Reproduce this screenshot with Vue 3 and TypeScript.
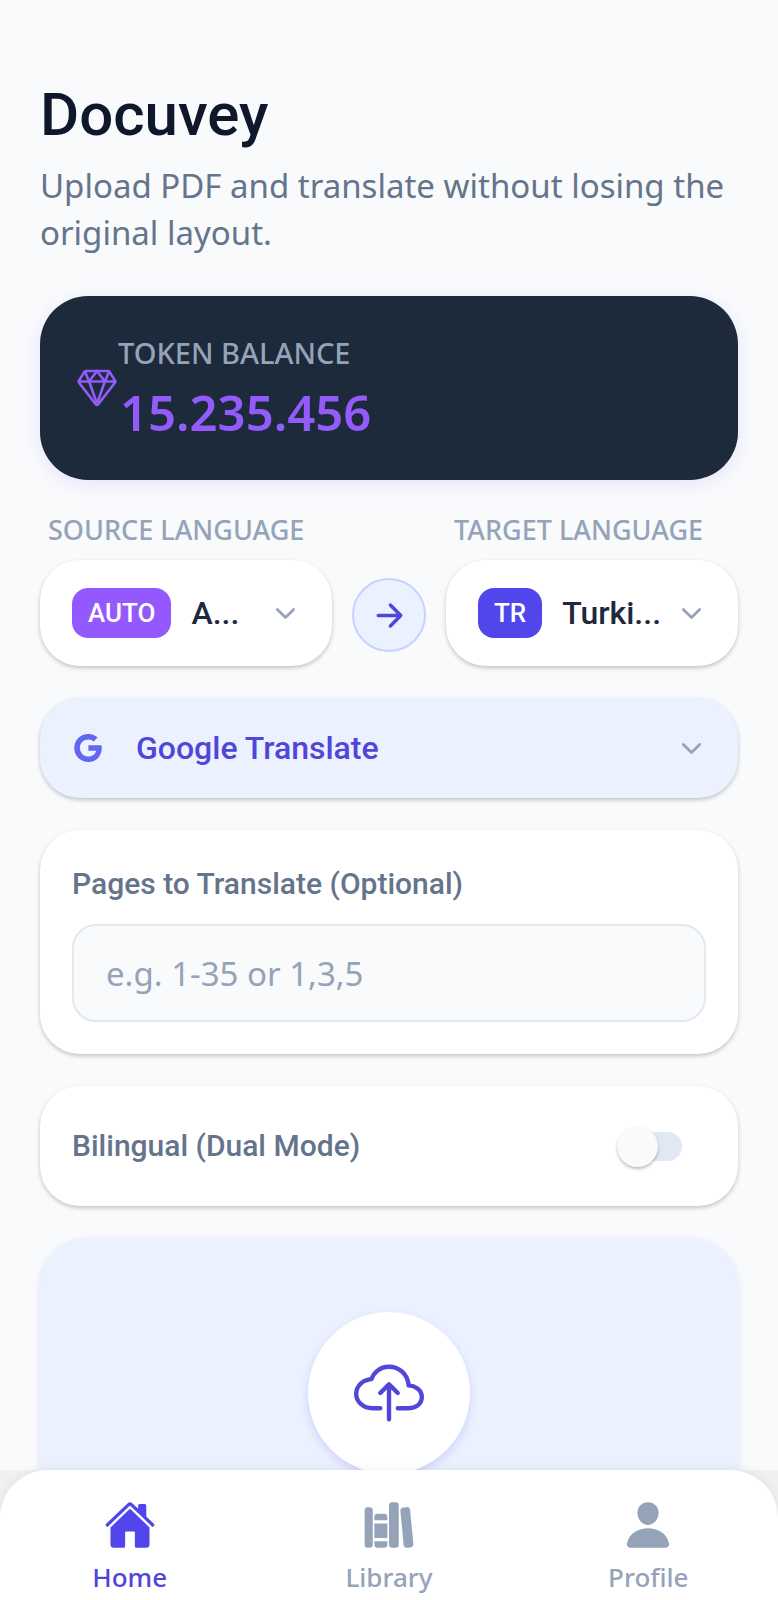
<script setup lang="ts">
import { ref } from 'vue'

interface Language {
  code: string
  label: string
}

interface Tab {
  id: string
  label: string
}

const source = ref<Language>({ code: 'AUTO', label: 'A...' })
const target = ref<Language>({ code: 'TR', label: 'Turki...' })
const engine = ref('Google Translate')
const pages = ref('')
const bilingual = ref(false)
const balance = '15.235.456'

const tabs: Tab[] = [
  { id: 'home', label: 'Home' },
  { id: 'library', label: 'Library' },
  { id: 'profile', label: 'Profile' },
]
const activeTab = ref('home')
</script>

<template>
  <div class="screen">
    <main class="content">
      <header class="intro">
        <h1>Docuvey</h1>
        <p>Upload PDF and translate without losing the original layout.</p>
      </header>

      <section class="balance">
        <svg class="gem" viewBox="0 0 512 512" aria-hidden="true">
          <path d="M35.42 188.21l207.75 269.46a16.17 16.17 0 0025.66 0l207.75-269.46a16.52 16.52 0 00.95-18.75L407.06 55.71A16.22 16.22 0 00393.27 48H118.73a16.22 16.22 0 00-13.79 7.71L34.47 169.46a16.52 16.52 0 00.95 18.75zM48 176h416" />
          <path d="M400 64l-48 112-96-128M112 64l48 112 96-128M256 448l-96-272M256 448l96-272" />
        </svg>
        <div class="balance-text">
          <div class="balance-label">TOKEN BALANCE</div>
          <div class="balance-value">{{ balance }}</div>
        </div>
      </section>

      <section class="languages">
        <div class="language">
          <label for="source">SOURCE LANGUAGE</label>
          <div class="card picker">
            <span class="badge auto">{{ source.code }}</span>
            <select id="source" v-model="source.label">
              <option>A...</option>
            </select>
            <svg class="chevron" viewBox="0 0 512 512" aria-hidden="true"><path d="M112 184l144 144 144-144" /></svg>
          </div>
        </div>
        <button class="swap" type="button" aria-label="Swap languages">
          <svg viewBox="0 0 512 512" aria-hidden="true"><path d="M268 112l144 144-144 144M392 256H100" /></svg>
        </button>
        <div class="language">
          <label for="target">TARGET LANGUAGE</label>
          <div class="card picker">
            <span class="badge">{{ target.code }}</span>
            <select id="target" v-model="target.label">
              <option>Turki...</option>
            </select>
            <svg class="chevron" viewBox="0 0 512 512" aria-hidden="true"><path d="M112 184l144 144 144-144" /></svg>
          </div>
        </div>
      </section>

      <section class="card engine">
        <svg class="google" viewBox="0 0 512 512" aria-hidden="true">
          <path d="M473.16 221.48l-2.26-9.59H262.46v88.22H387c-12.93 61.4-72.93 93.72-121.94 93.72-35.66 0-73.25-15-98.13-39.11a140.08 140.08 0 01-41.8-98.88c0-37.16 16.7-74.33 41-98.78s61-38.13 97.49-38.13c41.79 0 71.74 22.19 82.94 32.31l62.69-62.36C390.86 72.72 340.34 32 261.6 32c-60.75 0-119 23.27-161.58 65.71C58 139.5 36.25 199.93 36.25 256s20.58 113.48 61.3 155.6c43.51 44.92 105.13 68.4 168.58 68.4 57.73 0 112.45-22.62 151.45-63.66 38.34-40.4 58.17-96.3 58.17-154.9 0-24.67-2.48-39.32-2.59-39.96z" />
        </svg>
        <select v-model="engine" aria-label="Translation engine">
          <option>Google Translate</option>
        </select>
        <svg class="chevron" viewBox="0 0 512 512" aria-hidden="true"><path d="M112 184l144 144 144-144" /></svg>
      </section>

      <section class="card pages">
        <label for="pages">Pages to Translate (Optional)</label>
        <input id="pages" v-model="pages" type="text" placeholder="e.g. 1-35 or 1,3,5" />
      </section>

      <section class="card bilingual">
        <label for="bilingual">Bilingual (Dual Mode)</label>
        <input id="bilingual" v-model="bilingual" class="switch" type="checkbox" role="switch" />
      </section>

      <section class="upload">
        <button class="upload-button" type="button" aria-label="Upload PDF">
          <svg viewBox="0 0 512 512" aria-hidden="true">
            <path d="M320 367.79h76c55 0 100-29.21 100-83.6s-53-81.47-96-83.6c-8.89-85.06-71-136.8-144-136.8-69 0-113.44 45.79-128 91.2-60 5.7-112 43.88-112 106.4s54 106.4 120 106.4h56" />
            <path d="M320 255.79l-64-64-64 64M256 448.21V207.79" />
          </svg>
        </button>
      </section>
    </main>

    <div class="dock">
      <nav class="tabs">
        <button
          v-for="tab in tabs"
          :key="tab.id"
          type="button"
          class="tab"
          :class="{ active: tab.id === activeTab }"
          @click="activeTab = tab.id"
        >
          <svg viewBox="0 0 512 512" aria-hidden="true">
            <template v-if="tab.id === 'home'">
              <path d="M261.56 101.28a8 8 0 00-11.06 0L66.4 277.15a8 8 0 00-2.47 5.79L63.9 448a32 32 0 0032 32H192a16 16 0 0016-16V328a8 8 0 018-8h80a8 8 0 018 8v136a16 16 0 0016 16h96.06a32 32 0 0032-32V282.94a8 8 0 00-2.47-5.79z" />
              <path d="M490.91 244.15l-74.8-71.56V64a16 16 0 00-16-16h-48a16 16 0 00-16 16v32l-57.92-55.38C272.77 35.14 264.71 32 256 32c-8.68 0-16.72 3.14-22.14 8.63l-212.7 203.5c-6.22 6-7 15.87-1.34 22.37A16 16 0 0043 267.56L250.5 69.28a8 8 0 0111.06 0l207.52 198.28a16 16 0 0022.59-.44c6.14-6.36 5.63-16.86-.76-22.97z" />
            </template>
            <template v-else-if="tab.id === 'library'">
              <path d="M64 480H48a32 32 0 01-32-32V112a32 32 0 0132-32h16a32 32 0 0132 32v336a32 32 0 01-32 32zM240 176a32 32 0 00-32-32h-64a32 32 0 00-32 32v28a4 4 0 004 4h120a4 4 0 004-4zM112 448a32 32 0 0032 32h64a32 32 0 0032-32v-30a2 2 0 00-2-2H114a2 2 0 00-2 2z" />
              <rect x="112" y="240" width="128" height="144" rx="2" />
              <path d="M320 480h-32a32 32 0 01-32-32V64a32 32 0 0132-32h32a32 32 0 0132 32v384a32 32 0 01-32 32zM495.89 445.45l-32.23-340c-1.48-15.65-16.94-27-34.53-25.31l-31.85 3c-17.59 1.67-30.65 15.71-29.17 31.36l32.23 340c1.48 15.65 16.94 27 34.53 25.31l31.85-3c17.59-1.67 30.65-15.71 29.17-31.36z" />
            </template>
            <path v-else d="M332.64 64.58C313.18 43.57 286 32 256 32c-30.16 0-57.43 11.5-76.8 32.38-19.58 21.11-29.12 49.8-26.88 80.78C156.76 206.28 203.27 256 256 256s99.16-49.71 103.67-110.82c2.27-30.7-7.33-59.33-27.03-80.6zM432 480H80a31 31 0 01-24.2-11.13c-6.5-7.77-9.12-18.38-7.18-29.11C57.06 392.94 83.4 353.61 124.8 326c36.78-24.51 83.37-38 131.2-38s94.42 13.5 131.2 38c41.4 27.6 67.74 66.93 76.18 113.75 1.94 10.73-.68 21.34-7.18 29.11A31 31 0 01432 480z" />
          </svg>
          <span>{{ tab.label }}</span>
        </button>
      </nav>
    </div>
  </div>
</template>

<style>
body {
  background: #f8fafc;
}
</style>

<style scoped>
* {
  box-sizing: border-box;
}

.screen {
  display: flex;
  flex-direction: column;
  height: 100vh;
  overflow: hidden;
  background: #f8fafc;
  color: #64748b;
  font-family: "Noto Sans", "Open Sans", sans-serif;
}

.content {
  flex: 1;
  min-height: 0;
  display: flex;
  flex-direction: column;
  gap: 32px;
  padding: 80px 40px 0;
  overflow-y: auto;
  scrollbar-width: none;
}

.content > * {
  flex-shrink: 0;
}

button,
input,
select {
  margin: 0;
  border: 0;
  font: inherit;
  color: inherit;
}

select {
  appearance: none;
  flex: 1;
  min-width: 0;
  padding: 0;
  background: transparent;
  outline: none;
}

svg {
  display: block;
  flex: none;
}

.intro {
  padding-bottom: 8px;
}

h1 {
  margin: 0;
  font-family: Roboto, "Noto Sans", sans-serif;
  font-size: 60px;
  font-weight: 500;
  line-height: 70px;
  color: #0f172a;
}

p {
  margin: 12px 0 0;
  font-size: 33px;
  line-height: 47px;
}

.balance {
  display: flex;
  align-items: center;
  height: 184px;
  padding: 0 36px;
  border-radius: 48px;
  background: #1c2a3c;
  box-shadow: 0 4px 16px rgba(139, 92, 246, 0.14);
}

.gem {
  width: 42px;
  height: 42px;
  fill: none;
  stroke: #935bf9;
  stroke-width: 32;
  stroke-linecap: round;
  stroke-linejoin: round;
}

.balance-text {
  padding-top: 10px;
}

.balance-label {
  font-size: 29px;
  font-weight: 500;
  line-height: 38px;
  color: #94a3b8;
}

.balance-value {
  padding-left: 2px;
  font-size: 49px;
  font-weight: 600;
  line-height: 80px;
  color: #935bf9;
}

.languages {
  display: grid;
  grid-template-columns: 1fr 74px 1fr;
  gap: 20px;
  align-items: end;
}

.language {
  display: flex;
  flex-direction: column;
  gap: 12px;
  min-width: 0;
}

.language label {
  padding-left: 8px;
  font-size: 27px;
  font-weight: 500;
  line-height: 36px;
  color: #94a3b8;
}

.card {
  border-radius: 40px;
  background: #fff;
  box-shadow: 0 2px 4px rgba(0, 0, 0, 0.22);
}

.picker {
  display: flex;
  align-items: center;
  height: 106px;
  padding: 0 32px;
  color: #1e293b;
  font-family: Roboto, "Noto Sans", sans-serif;
  font-size: 32px;
  font-weight: 500;
}

.badge {
  margin-right: 20px;
  padding: 0 16px;
  border-radius: 16px;
  background: #5046ec;
  color: #fff;
  font-size: 26px;
  line-height: 50px;
}

.badge.auto {
  background: #9359ff;
}

.chevron {
  width: 29px;
  height: 29px;
  fill: none;
  stroke: #94a3b8;
  stroke-width: 48;
  stroke-linecap: round;
  stroke-linejoin: round;
}

.swap {
  display: grid;
  place-items: center;
  height: 74px;
  margin-bottom: 14px;
  padding: 0;
  border: 2px solid #c7d2fe;
  border-radius: 50%;
  background: #ebf1ff;
}

.swap svg {
  width: 37px;
  height: 37px;
  fill: none;
  stroke: #5046d8;
  stroke-width: 48;
  stroke-linecap: round;
  stroke-linejoin: round;
}

.engine {
  display: flex;
  align-items: center;
  height: 100px;
  padding: 0 32px;
  background: #ebf1ff;
  color: #5046d8;
  font-family: Roboto, "Noto Sans", sans-serif;
  font-size: 32px;
  font-weight: 500;
}

.google {
  width: 32px;
  height: 32px;
  margin-right: 32px;
  fill: #6366f1;
}

.pages {
  display: flex;
  flex-direction: column;
  gap: 18px;
  padding: 32px;
}

.pages label,
.bilingual label {
  font-family: Roboto, "Noto Sans", sans-serif;
  font-size: 30px;
  font-weight: 500;
  line-height: 44px;
}

.pages input {
  width: 100%;
  height: 98px;
  padding: 0 32px;
  border: 2px solid #e2e8f0;
  border-radius: 24px;
  background: #f8fafc;
  font-size: 33px;
}

.pages input::placeholder {
  color: #94a3b8;
  opacity: 1;
}

.bilingual {
  display: flex;
  align-items: center;
  justify-content: space-between;
  height: 120px;
  padding: 0 56px 0 32px;
}

.switch {
  appearance: none;
  display: flex;
  align-items: center;
  width: 65px;
  height: 29px;
  border-radius: 15px;
  background: #e0e8f1;
}

.switch::before {
  content: "";
  width: 41px;
  height: 41px;
  border-radius: 50%;
  background: #fafafa;
  box-shadow: 0 2px 3px rgba(0, 0, 0, 0.25);
}

.switch:checked {
  justify-content: flex-end;
  background: #a5b4fc;
}

.upload {
  display: flex;
  justify-content: center;
  padding: 74px 32px 160px;
  border-radius: 48px;
  background: #ebf1ff;
  box-shadow: 0 2px 6px rgba(80, 70, 229, 0.14);
}

.upload-button {
  display: grid;
  place-items: center;
  width: 162px;
  height: 162px;
  padding: 0;
  border-radius: 50%;
  background: #fff;
  box-shadow: 0 4px 8px rgba(80, 70, 229, 0.18);
}

.upload-button svg {
  width: 70px;
  height: 70px;
  fill: none;
  stroke: #5046d8;
  stroke-width: 32;
  stroke-linecap: round;
  stroke-linejoin: round;
}

.dock {
  flex: none;
  background: #f0f0f0;
}

.tabs {
  display: grid;
  grid-template-columns: repeat(3, 1fr);
  height: 130px;
  border-radius: 48px 48px 0 0;
  background: #fff;
  box-shadow: 0 -2px 8px rgba(0, 0, 0, 0.05);
}

.tab {
  display: flex;
  flex-direction: column;
  align-items: center;
  gap: 8px;
  padding: 29px 0 0;
  background: transparent;
  color: #94a3b8;
  font-size: 26px;
  font-weight: 500;
  line-height: 36px;
}

.tab svg {
  width: 52px;
  height: 52px;
  fill: currentColor;
}

.tab.active {
  color: #5046d8;
}

.tab.active svg {
  fill: #5046ec;
}
</style>
